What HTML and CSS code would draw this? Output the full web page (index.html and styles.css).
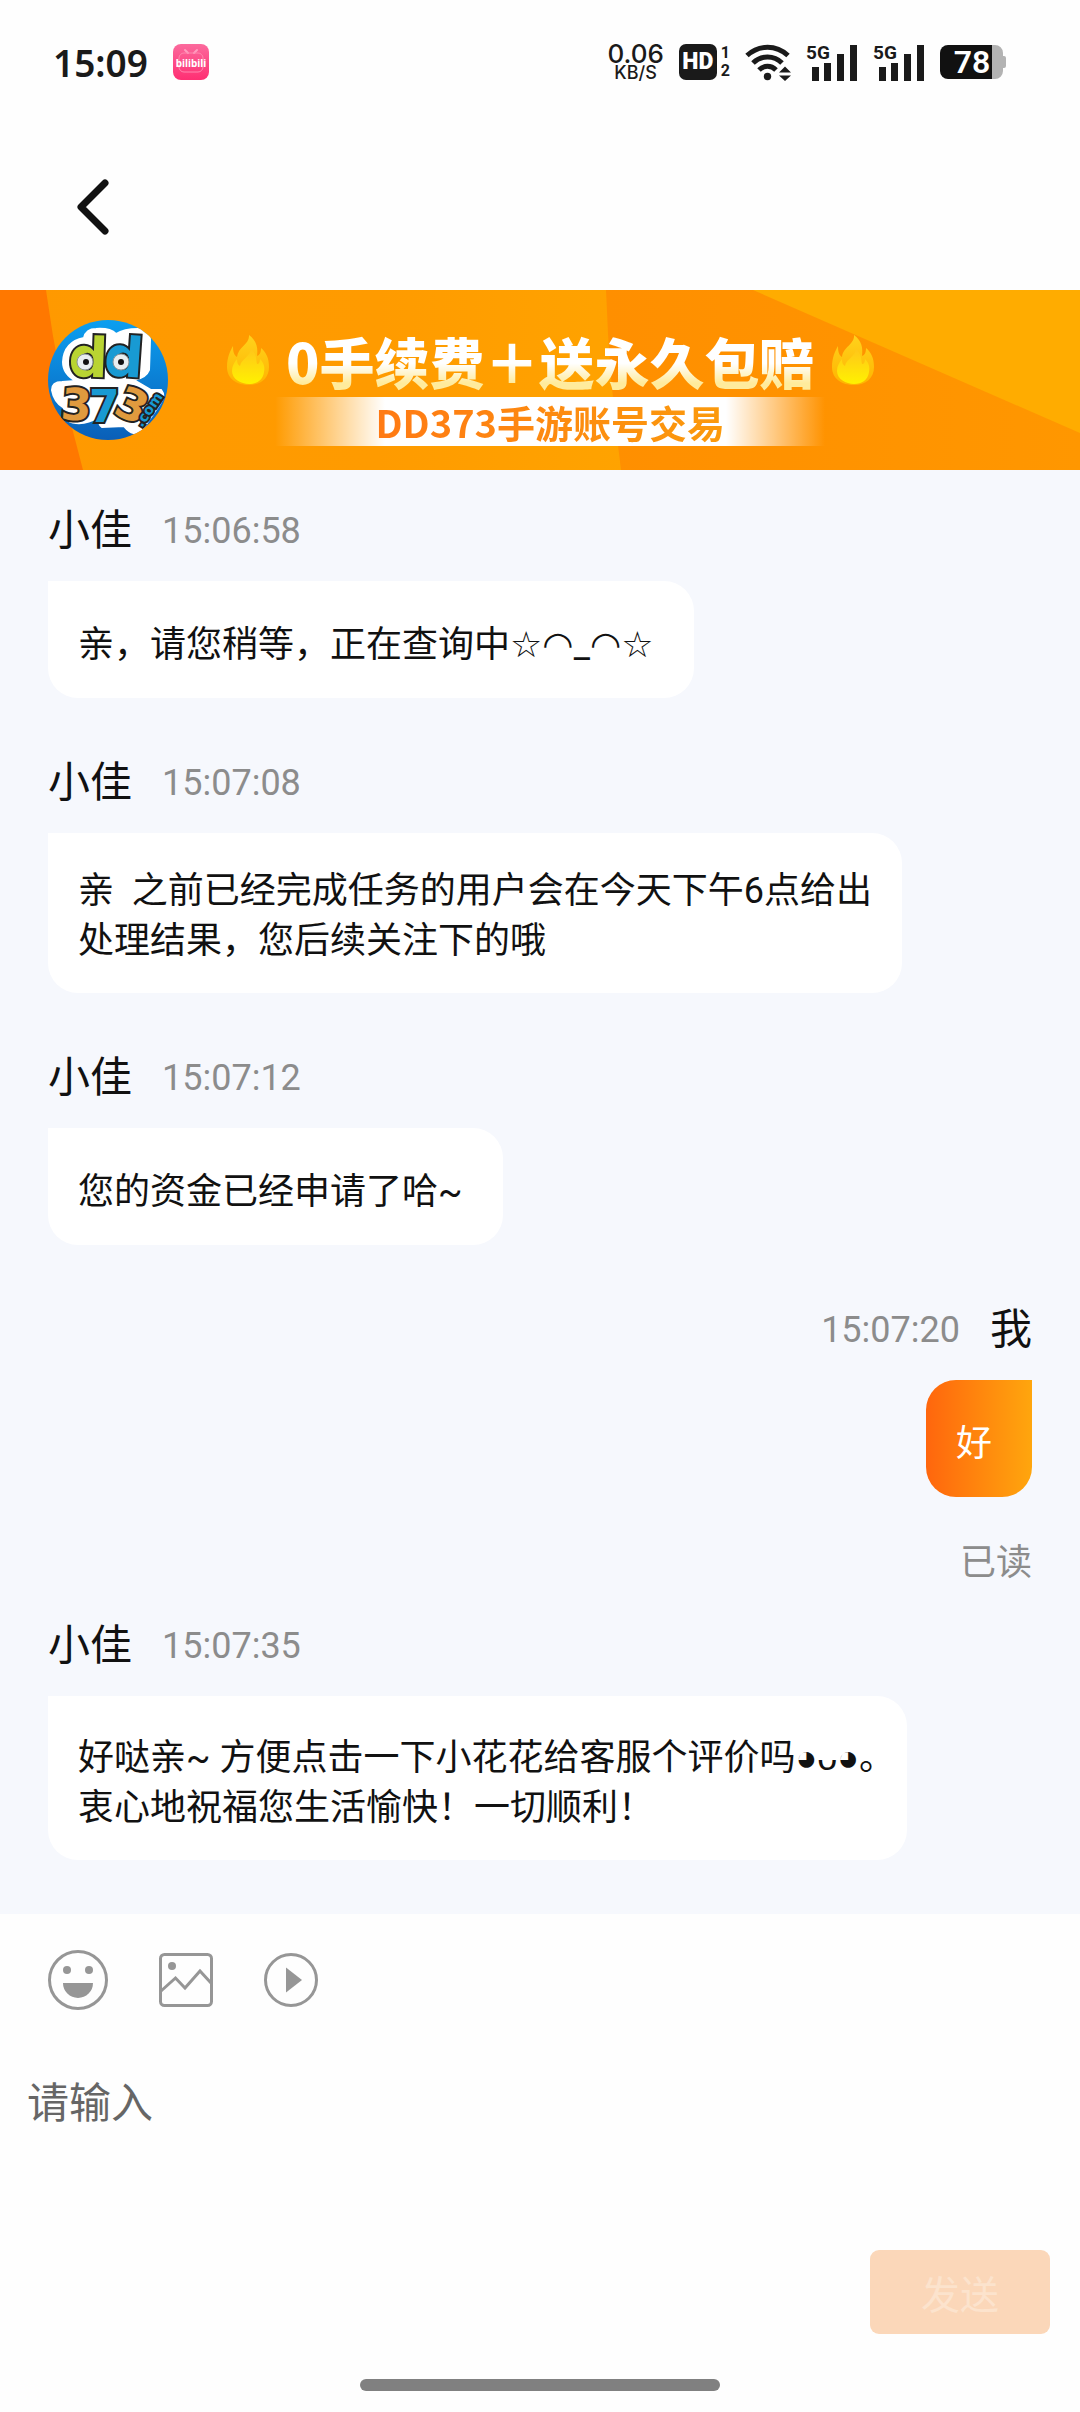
FILE: index.html
```html
<!DOCTYPE html>
<html lang="zh-CN">
<head>
    <meta charset="UTF-8">
    <meta name="viewport" content="width=device-width, initial-scale=1.0">
    <title>在线客服</title>
    <link rel="stylesheet" href="styles.css">
</head>
<body>
    <div class="status-bar">
        <div class="status-left">
            <span class="clock">15:09</span>
            <svg class="app-icon" viewBox="0 0 36 36">
                <defs>
                    <linearGradient id="pink" x1="0" y1="0" x2="0" y2="1">
                        <stop offset="0" stop-color="#fb6a9d"/>
                        <stop offset="1" stop-color="#ff2f73"/>
                    </linearGradient>
                </defs>
                <rect width="36" height="36" rx="8" fill="url(#pink)"/>
                <path d="M12 6l3 3M24 6l-3 3" stroke="#ff9dbf" stroke-width="2" stroke-linecap="round"/>
                <rect x="6" y="9" width="24" height="19" rx="5" fill="none" stroke="#ff86ae" stroke-width="1"/>
                <text x="18" y="23" text-anchor="middle" class="app-name">bilibili</text>
            </svg>
        </div>
        <div class="status-right">
            <div class="net-speed">
                <span class="speed-num">0.06</span>
                <span class="speed-unit">KB/S</span>
            </div>
            <div class="volte">
                <span class="hd">HD</span>
                <span class="sims"><span>1</span><span>2</span></span>
            </div>
            <svg class="wifi" viewBox="0 0 46 37">
                <g fill="none" stroke="#1a1a1a" stroke-width="5">
                    <path d="M2 11.500C14 .5 31 .5 43 11.500"/>
                    <path d="M8 19C16 11 29 11 37 19"/>
                    <path d="M14 26C19 21 26 21 31 26"/>
                </g>
                <circle cx="22.500" cy="32.500" r="3.700" fill="#1a1a1a"/>
                <path d="M34 28.500l6-6 6 6zM34 31.500l6 5.500 6-5.500z" fill="#1a1a1a"/>
            </svg>
            <svg class="signal" viewBox="0 -8 52 53">
                <text x="0" y="15" class="signal-type">5G</text>
                <path d="M6 23h7v14H6zM18 19h7v18h-7zM31 10h7v27h-7zM44 1h7v36h-7z" fill="#1a1a1a"/>
            </svg>
            <svg class="signal" viewBox="0 -8 52 53">
                <text x="0" y="15" class="signal-type">5G</text>
                <path d="M6 23h7v14H6zM18 19h7v18h-7zM31 10h7v27h-7zM44 1h7v36h-7z" fill="#1a1a1a"/>
            </svg>
            <svg class="battery" viewBox="0 -5 66 44">
                <path d="M52 0h3a8 8 0 0 1 8 8v3h1a2 2 0 0 1 2 2v8a2 2 0 0 1-2 2h-1v3a8 8 0 0 1-8 8h-3z" fill="#b3b3b3"/>
                <path d="M8 0h44v34H8a8 8 0 0 1-8-8V8a8 8 0 0 1 8-8z" fill="#111"/>
                <text x="32" y="28" text-anchor="middle" class="battery-num">78</text>
            </svg>
        </div>
    </div>

    <header class="nav">
        <button type="button" class="back" aria-label="返回">
            <svg viewBox="0 0 34 58">
                <path d="M29 5L5 29l24 24" fill="none" stroke="#111" stroke-width="7" stroke-linecap="round" stroke-linejoin="round"/>
            </svg>
        </button>
    </header>

    <section class="banner">
        <svg class="banner-bg" viewBox="0 0 1080 180" preserveAspectRatio="none">
            <defs>
                <linearGradient id="base">
                    <stop offset="0" stop-color="#ff9900"/>
                    <stop offset=".35" stop-color="#ff9b00"/>
                    <stop offset=".58" stop-color="#ffa300"/>
                </linearGradient>
                <linearGradient id="mid">
                    <stop offset="0" stop-color="#ff8f00"/>
                    <stop offset="1" stop-color="#ff9700"/>
                </linearGradient>
            </defs>
            <path d="M0 0h1080v180H0z" fill="url(#base)"/>
            <path d="M0 0h46q12 90 37 180H0z" fill="#ff7800"/>
            <path d="M606 0h474v180H621q-12-90-15-180z" fill="url(#mid)"/>
            <path d="M753 0h327v143z" fill="#ffac00"/>
        </svg>
        <svg class="avatar" viewBox="0 0 120 120">
            <defs>
                <linearGradient id="sky" x1="0" y1="0" x2="0" y2="1">
                    <stop offset="0" stop-color="#0c9ff0"/>
                    <stop offset="1" stop-color="#0a5fb8"/>
                </linearGradient>
                <clipPath id="round"><circle cx="60" cy="60" r="60"/></clipPath>
            </defs>
            <g clip-path="url(#round)">
                <rect width="120" height="120" fill="url(#sky)"/>
                <path d="M15 42Q16 22 36 18Q38 9 48 9Q62 8 68 14Q76 9 90 9Q102 9 102 20L101 50Q98 58 86 60L103 70L113 70Q118 76 112 84L94 110Q86 118 76 106L54 107Q50 104 50 97Q40 104 28 103Q14 102 16 88Q6 82 4 70Q4 62 14 62L28 61Q15 54 15 42z" fill="#fff" stroke="#fff" stroke-width="2"/>
                <g class="logo-fill">
                    <text x="20" y="56" class="logo-d green" transform="rotate(2 20 56)">d</text>
                    <text x="55" y="55" class="logo-d blue" transform="rotate(4 55 55)">d</text>
                    <text x="12" y="99" class="logo-n brown" transform="rotate(4 12 99)">3</text>
                    <text x="41" y="102" class="logo-n blue">7</text>
                    <text x="64" y="93" class="logo-n brown" transform="rotate(24 64 93)">3</text>
                    <text x="94" y="108" class="logo-com blue" transform="rotate(-56 94 108)">.com</text>
                </g>
                <circle cx="37" cy="42" r="8" fill="#e9eef0" stroke="#8a9499"/>
                <circle cx="38" cy="42" r="3" fill="#111"/>
                <circle cx="73" cy="42" r="8" fill="#e9eef0" stroke="#8a9499"/>
                <circle cx="73" cy="42" r="3" fill="#111"/>
            </g>
        </svg>
        <div class="banner-text">
            <div class="banner-title">
                <svg class="flame" viewBox="0 0 44 50">
                    <defs>
                        <linearGradient id="fire" x1="0" y1="0" x2="0" y2="1">
                            <stop offset="0" stop-color="#ffd21c"/>
                            <stop offset="1" stop-color="#ffb400"/>
                        </linearGradient>
                        <linearGradient id="core" x1="0" y1="0" x2="0" y2="1">
                            <stop offset="0" stop-color="#ffc61a"/>
                            <stop offset="1" stop-color="#fff200"/>
                        </linearGradient>
                    </defs>
                    <path d="M23 0c8 6 9 13 8 21 3-1 4-4 4-8 5 4 8 10 8 19 0 11-8 18-20 18S1 44 1 32C1 23 4 16 7 11c0 6 1 9 4 11C12 12 24 9 23 0z" fill="url(#fire)"/>
                    <path d="M25 14c6 5 5 11 6 15 2 0 3-2 3-5 4 4 5 8 4 13-1 8-7 12-15 12S6 44 6 36c0-5 2-8 5-12 0 4 1 6 3 7 1-7 10-9 11-17z" fill="url(#core)"/>
                </svg>
                <span class="title-text">0手续费＋送永久包赔</span>
                <svg class="flame" viewBox="0 0 44 50">
                    <path d="M23 0c8 6 9 13 8 21 3-1 4-4 4-8 5 4 8 10 8 19 0 11-8 18-20 18S1 44 1 32C1 23 4 16 7 11c0 6 1 9 4 11C12 12 24 9 23 0z" fill="url(#fire)"/>
                    <path d="M25 14c6 5 5 11 6 15 2 0 3-2 3-5 4 4 5 8 4 13-1 8-7 12-15 12S6 44 6 36c0-5 2-8 5-12 0 4 1 6 3 7 1-7 10-9 11-17z" fill="url(#core)"/>
                </svg>
            </div>
            <div class="banner-sub"><span>DD373手游账号交易</span></div>
        </div>
    </section>

    <main class="chat">
        <div class="message">
            <div class="message-head"><span class="name">小佳</span><time>15:06:58</time></div>
            <p class="bubble single">亲，请您稍等，正在查询中<span class="kaomoji">☆◠_◠☆</span></p>
        </div>
        <div class="message">
            <div class="message-head"><span class="name">小佳</span><time>15:07:08</time></div>
            <p class="bubble">亲&nbsp; 之前已经完成任务的用户会在今天下午6点给出<br>处理结果，您后续关注下的哦</p>
        </div>
        <div class="message">
            <div class="message-head"><span class="name">小佳</span><time>15:07:12</time></div>
            <p class="bubble single">您的资金已经申请了哈~</p>
        </div>
        <div class="message mine">
            <div class="message-head"><time>15:07:20</time><span class="name">我</span></div>
            <p class="bubble single">好</p>
            <span class="read">已读</span>
        </div>
        <div class="message">
            <div class="message-head"><span class="name">小佳</span><time>15:07:35</time></div>
            <p class="bubble closing">好哒亲~ 方便点击一下小花花给客服个评价吗◕ᴗ◕。<br>衷心地祝福您生活愉快！一切顺利！</p>
        </div>
    </main>

    <form class="composer">
        <div class="toolbar">
            <button type="button" class="tool" aria-label="表情">
                <svg width="60" height="60" viewBox="0 0 60 60">
                    <circle cx="30" cy="30" r="28.500" fill="none" stroke="#969696" stroke-width="3"/>
                    <circle cx="19" cy="20" r="4" fill="#969696"/>
                    <circle cx="41" cy="20" r="4" fill="#969696"/>
                    <path d="M15 33h30a15 15 0 0 1-30 0z" fill="#969696"/>
                </svg>
            </button>
            <button type="button" class="tool" aria-label="图片">
                <svg width="54" height="54" viewBox="0 0 54 54">
                    <rect x="1.500" y="1.500" width="51" height="51" rx="4" fill="none" stroke="#969696" stroke-width="3"/>
                    <circle cx="13" cy="13" r="4" fill="#969696"/>
                    <path d="M2 38l14.500-13L26 35l15-17 11 12" fill="none" stroke="#969696" stroke-width="3"/>
                </svg>
            </button>
            <button type="button" class="tool" aria-label="视频">
                <svg width="54" height="54" viewBox="0 0 54 54">
                    <circle cx="27" cy="27" r="25.500" fill="none" stroke="#969696" stroke-width="3"/>
                    <path d="M22 14.500v25L38 27z" fill="#969696"/>
                </svg>
            </button>
        </div>
        <textarea class="input" aria-label="输入消息" placeholder="请输入"></textarea>
        <button type="submit" class="send" disabled>发送</button>
    </form>
    <div class="home-bar"></div>
</body>
</html>
```
FILE: styles.css
```css
* {
    margin: 0;
    padding: 0;
    box-sizing: border-box;
}

body {
    font-family: Roboto, 'Noto Sans CJK SC', sans-serif;
    color: #111;
    background-color: #fefefe;
    display: flex;
    flex-direction: column;
    min-height: 100vh;
}

button {
    border: none;
    background: none;
    cursor: pointer;
}

svg {
    display: block;
}

/* 状态栏 */
.status-bar {
    display: flex;
    justify-content: space-between;
    align-items: center;
    height: 124px;
    padding: 0 74px 0 53px;
    font-family: 'Noto Sans', sans-serif;
    color: #1a1a1a;
}

.status-left,
.status-right,
.volte {
    display: flex;
    align-items: center;
}

.status-left {
    gap: 25px;
}

.clock {
    font-size: 37px;
    font-weight: 600;
}

.app-icon {
    width: 36px;
    height: 36px;
}

.app-name {
    font: bold 10px 'Noto Sans', sans-serif;
    fill: #fff;
}

.status-right {
    gap: 15px;
}

.net-speed {
    display: flex;
    flex-direction: column;
    align-items: center;
    font-family: Inter, sans-serif;
    font-weight: 500;
}

.speed-num {
    font-size: 26px;
    line-height: 22px;
}

.speed-unit {
    font-size: 18px;
    line-height: 16px;
}

.volte {
    gap: 4px;
}

.hd {
    width: 38px;
    height: 36px;
    border-radius: 7px;
    background-color: #1a1a1a;
    color: #fff;
    font-family: Roboto, sans-serif;
    font-size: 23px;
    font-weight: 900;
    line-height: 36px;
    text-align: center;
}

.sims {
    display: flex;
    flex-direction: column;
    font-family: Roboto, sans-serif;
    font-size: 16px;
    font-weight: 700;
    line-height: 18px;
}

.wifi {
    width: 46px;
    height: 37px;
}

.signal {
    width: 52px;
    height: 53px;
}

.signal-type {
    font: bold 19px Roboto, sans-serif;
    fill: #1a1a1a;
}

.battery {
    width: 66px;
    height: 44px;
}

.battery-num {
    font: 600 32px Roboto, sans-serif;
    fill: #fff;
}

.nav {
    display: flex;
    align-items: center;
    height: 166px;
    padding: 0 76px;
}

.back svg {
    width: 34px;
    height: 58px;
}

/* 顶部横幅 */
.banner {
    position: relative;
    display: flex;
    align-items: center;
    gap: 58px;
    height: 180px;
    padding: 0 48px;
}

.banner-bg {
    position: absolute;
    inset: 0;
    width: 100%;
    height: 100%;
}

.avatar {
    position: relative;
    width: 120px;
    height: 120px;
}

.logo-d {
    font: bold 55px 'DejaVu Sans', sans-serif;
}

.logo-n {
    font: bold 44px 'DejaVu Sans', sans-serif;
}

.logo-com {
    font: bold 14px 'DejaVu Sans', sans-serif;
}

.logo-fill text {
    stroke: #222;
    stroke-width: 4px;
    paint-order: stroke;
}

.logo-fill .green {
    fill: #b9d432;
}

.logo-fill .blue {
    fill: #189ad3;
}

.logo-fill .brown {
    fill: #e09a3e;
}

.banner-text {
    position: relative;
    display: flex;
    flex-direction: column;
    align-items: center;
    padding-top: 12px;
}

.banner-title {
    display: flex;
    align-items: center;
    gap: 16px;
    height: 70px;
    padding-bottom: 4px;
}

.flame {
    width: 44px;
    height: 50px;
}

.title-text {
    font-family: 'Noto Sans CJK SC', sans-serif;
    font-size: 55px;
    font-weight: 900;
    line-height: 66px;
    background: linear-gradient(#fff 55%, #ffeb9c 85%);
    background-clip: text;
    -webkit-background-clip: text;
    color: transparent;
}

.banner-sub {
    width: 550px;
    height: 49px;
    line-height: 49px;
    text-align: center;
    background: linear-gradient(90deg, rgba(255, 255, 255, 0), #fff 20%, #fff 82%, rgba(255, 255, 255, 0));
}

.banner-sub span {
    font-family: 'Noto Sans CJK SC', sans-serif;
    font-size: 38px;
    font-weight: 700;
    background: linear-gradient(90deg, #ff7a14, #fb9a0c);
    background-clip: text;
    -webkit-background-clip: text;
    color: transparent;
}

/* 聊天记录 */
.chat {
    display: flex;
    flex-direction: column;
    gap: 55px;
    padding: 31px 48px 54px;
    background-color: #f6f8fd;
}

.message {
    display: flex;
    flex-direction: column;
    align-items: flex-start;
}

.message-head {
    display: flex;
    align-items: center;
    gap: 30px;
    height: 60px;
    margin-bottom: 20px;
}

.name {
    font-size: 42px;
    line-height: 60px;
}

time,
.read {
    font-size: 36px;
    color: #8c8c8c;
}

.bubble {
    padding: 33px 30px 27px;
    border-radius: 0 30px 30px 30px;
    background-color: #fff;
    font-size: 36px;
    line-height: 50px;
}

.bubble.single {
    padding: 39px 40px 28px 30px;
}

.bubble.closing {
    padding: 37px 12px 27px 30px;
}

.kaomoji {
    font-family: Roboto, 'DejaVu Sans', sans-serif;
}

.mine {
    align-items: flex-end;
    margin-bottom: -25px;
}

.mine .bubble {
    border-radius: 30px 0 30px 30px;
    background: linear-gradient(90deg, #ff660d, #ffa60d);
    color: #fff;
}

.read {
    margin-top: 44px;
    line-height: 45px;
}

/* 输入区 */
.composer {
    flex: 1;
    display: flex;
    flex-direction: column;
    padding-top: 36px;
}

.toolbar {
    display: flex;
    align-items: center;
    gap: 51px;
    padding: 0 48px;
}

.input {
    flex: 1;
    margin-top: 44px;
    padding: 20px 27px;
    border: none;
    outline: none;
    resize: none;
    background: none;
    font-family: inherit;
    font-size: 42px;
    line-height: 60px;
}

.input::placeholder {
    color: #666;
}

.send {
    align-self: flex-end;
    width: 180px;
    height: 84px;
    margin-right: 30px;
    border-radius: 9px;
    background-color: #fbd7b9;
    color: #fce3cd;
    font-family: inherit;
    font-size: 39px;
}

.home-bar {
    align-self: center;
    width: 33.333%;
    height: 12px;
    margin: 45px 0 21px;
    border-radius: 6px;
    background-color: #808080;
}
```
